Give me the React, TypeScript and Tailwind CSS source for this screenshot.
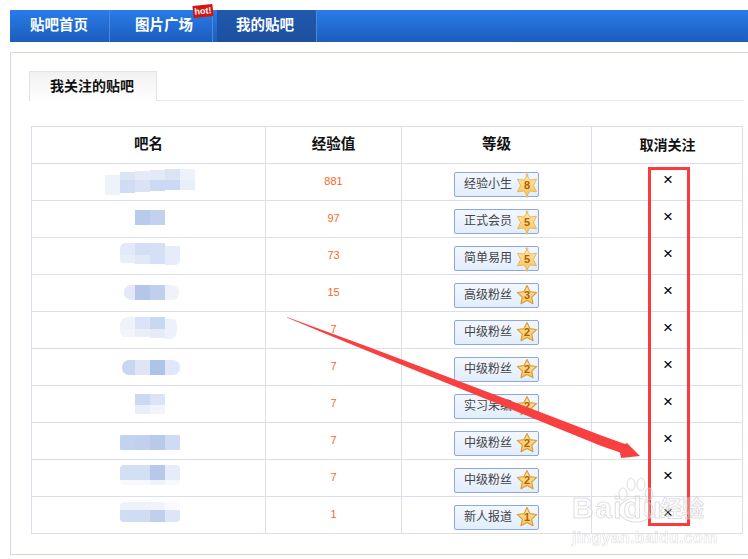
import React from "react";

type Block = [number, number, number, number, string];

type Row = {
  exp: number;
  rank: string;
  level: number;
  badge: "sheriff" | "star";
  clip: [number, number, number, number, number];
  blocks: Block[];
};

// mosaic coordinates are page pixels, the svg viewBox is shifted per row
const rows: Row[] = [
  {
    exp: 881, rank: "经验小生", level: 8, badge: "sheriff", clip: [105, 169, 90, 26, 2],
    blocks: [
      [105, 175, 15, 20, "#edf2fb"], [120, 172, 15, 8, "#dbe5f6"], [120, 180, 15, 13, "#cfdcf4"],
      [135, 171, 15, 9, "#e4ebf8"], [135, 180, 15, 12, "#dae3f5"], [150, 170, 15, 10, "#e2eaf8"],
      [150, 180, 15, 11, "#cbd9f2"], [165, 169, 15, 11, "#dbe4f5"], [165, 180, 15, 10, "#cbd9f2"],
      [180, 169, 15, 11, "#eef2fb"], [180, 180, 15, 10, "#e9effa"],
    ],
  },
  {
    exp: 97, rank: "正式会员", level: 5, badge: "sheriff", clip: [135, 210, 30, 15, 0],
    blocks: [[135, 210, 15, 15, "#b9cbea"], [150, 210, 15, 15, "#c1d1ee"]],
  },
  {
    exp: 73, rank: "简单易用", level: 5, badge: "sheriff", clip: [120, 243, 60, 22, 5],
    blocks: [
      [120, 243, 15, 12, "#e2e9f8"], [120, 255, 15, 8, "#e8eef9"], [135, 243, 15, 12, "#d5dff4"],
      [135, 255, 15, 9, "#e1e8f7"], [150, 243, 15, 21, "#d6e0f4"], [165, 246, 15, 19, "#e6ecf9"],
    ],
  },
  {
    exp: 15, rank: "高级粉丝", level: 3, badge: "star", clip: [124, 285, 55, 15, 7],
    blocks: [
      [124, 285, 11, 15, "#e3e9f8"], [135, 285, 15, 15, "#b4c7e9"],
      [150, 285, 15, 15, "#c0d0ec"], [165, 285, 14, 15, "#eef2fb"],
    ],
  },
  {
    exp: 7, rank: "中级粉丝", level: 2, badge: "star", clip: [120, 317, 57, 22, 8],
    blocks: [
      [120, 317, 15, 12, "#edf2fb"], [120, 329, 15, 8, "#f2f5fc"], [135, 317, 15, 12, "#dbe4f6"],
      [135, 329, 15, 8, "#e9eef9"], [150, 317, 15, 12, "#c9d8f1"], [150, 329, 15, 9, "#e5ebf8"],
      [165, 319, 12, 20, "#edf1fb"],
    ],
  },
  {
    exp: 7, rank: "中级粉丝", level: 2, badge: "star", clip: [122, 360, 58, 15, 7],
    blocks: [
      [122, 360, 13, 15, "#c8d6f2"], [135, 360, 15, 15, "#dde5f6"],
      [150, 360, 15, 15, "#aec3e9"], [165, 360, 15, 15, "#e0e7f7"],
    ],
  },
  {
    exp: 7, rank: "实习呆编", level: 2, badge: "star", clip: [135, 394, 30, 20, 0],
    blocks: [
      [135, 394, 15, 11, "#cbd9f2"], [135, 405, 15, 9, "#e9eef9"],
      [150, 394, 15, 11, "#dbe4f6"], [150, 405, 15, 9, "#f1f4fb"],
    ],
  },
  {
    exp: 7, rank: "中级粉丝", level: 2, badge: "star", clip: [120, 435, 60, 15, 1],
    blocks: [
      [120, 435, 15, 15, "#c2d3f0"], [135, 435, 15, 15, "#c1d0ee"],
      [150, 435, 15, 15, "#b7caea"], [165, 435, 15, 15, "#cfdbf3"],
    ],
  },
  {
    exp: 7, rank: "中级粉丝", level: 2, badge: "star", clip: [120, 465, 60, 20, 4],
    blocks: [
      [120, 465, 30, 15, "#d3e0f3"], [150, 465, 15, 15, "#b6c9ea"], [165, 465, 15, 15, "#e6ecf8"],
      [120, 480, 30, 5, "#f7f9fd"], [150, 480, 15, 5, "#eff3fb"], [165, 480, 15, 5, "#f7f9fd"],
    ],
  },
  {
    exp: 1, rank: "新人报道", level: 1, badge: "star", clip: [120, 502, 60, 20, 4],
    blocks: [
      [120, 502, 30, 8, "#eef2fa"], [150, 502, 15, 8, "#f1f4fb"], [165, 502, 15, 8, "#f9fafd"],
      [120, 510, 15, 12, "#d0dcf3"], [135, 510, 15, 12, "#d0dcf3"],
      [150, 510, 15, 12, "#c0d0ec"], [165, 510, 15, 12, "#dde5f6"],
    ],
  },
];

const Mosaic = ({ row, index }: { row: Row; index: number }) => {
  const top = 164 + index * 37;
  const [x, y, w, h, r] = row.clip;
  return (
    <svg width="233" height="36" viewBox={`32 ${top} 233 36`} className="block">
      <clipPath id={`mosaic-${index}`}>
        <rect x={x} y={y} width={w} height={h} rx={r} />
      </clipPath>
      <g clipPath={`url(#mosaic-${index})`}>
        {row.blocks.map((b, i) => (
          <rect key={i} x={b[0]} y={b[1]} width={b[2]} height={b[3]} fill={b[4]} />
        ))}
      </g>
    </svg>
  );
};

const LevelIcon = ({ kind, level, id }: { kind: Row["badge"]; level: number; id: number }) => (
  <svg
    width="22"
    height="25"
    viewBox="0 0 22 25"
    className={kind === "star" ? "absolute top-[-1px] left-[61px]" : "absolute top-0 left-[61px]"}
  >
    <defs>
      <linearGradient id={`lv-${id}`} x1="0" y1="0" x2="0" y2="1">
        <stop offset="0" stopColor="#ffe9a6" />
        <stop offset="1" stopColor="#f7c45a" />
      </linearGradient>
    </defs>
    {kind === "star" ? (
      <path
        d="M11 2.6l2.9 6 6.7.9-4.9 4.6 1.3 6.6-6-3.2-6 3.2 1.3-6.6L1.4 9.5l6.7-.9z"
        fill={`url(#lv-${id})`}
        stroke="#d8a03a"
        strokeWidth="1.2"
        strokeLinejoin="round"
      />
    ) : (
      <g stroke="#e2ad4e" strokeWidth="0.8" strokeLinejoin="round" fill={`url(#lv-${id})`}>
        <circle cx="11" cy="1.8" r="1" />
        <circle cx="11" cy="23.2" r="1" />
        <path d="M11 2.5l3 4.6 6.5-.9-3 6.3 3 6.3-6.5-.9-3 4.6-3-4.6-6.5.9 3-6.3-3-6.3 6.5.9z" />
      </g>
    )}
    <text
      x="11"
      y="16"
      textAnchor="middle"
      fontSize="11"
      fontWeight="700"
      fontFamily="Liberation Sans, sans-serif"
      fill="#b55c0c"
    >
      {level}
    </text>
  </svg>
);

const RankBadge = ({ row, id }: { row: Row; id: number }) => (
  <div className="relative mx-auto mt-[8px] h-[25px] w-[85px] rounded-[2px] border border-[#8ba7e8] bg-gradient-to-b from-[#f3f8ff] to-[#e2edfd] pl-[9px] text-left text-[12px] leading-[23px] text-[#444]">
    {row.rank}
    <LevelIcon kind={row.badge} level={row.level} id={id} />
  </div>
);

const Watermark = () => (
  <div className="pointer-events-none absolute top-[478px] left-[572px] h-[72px] w-[140px] opacity-65 blur-[0.4px]">
    <svg width="40" height="48" viewBox="0 0 40 48" className="absolute top-0 left-[45px]">
      <g fill="#ffffff" fillOpacity="0.4" stroke="#d4d4d4" strokeWidth="1.2">
        <ellipse cx="6" cy="16" rx="4" ry="6" />
        <ellipse cx="14" cy="6.5" rx="4" ry="6" />
        <ellipse cx="24" cy="6.5" rx="4" ry="6" />
        <ellipse cx="32" cy="16" rx="3.8" ry="6" />
        <ellipse cx="19" cy="32" rx="17" ry="12" fillOpacity="0.2" />
      </g>
    </svg>
    <div className="absolute top-[12px] left-0 text-[30px] leading-[36px] font-bold tracking-[1.5px] whitespace-nowrap text-white/40 [-webkit-text-stroke:1px_#cfcfcf]">
      Baidu
    </div>
    <div className="absolute top-[17px] left-[88px] text-[22px] leading-[28px] font-bold whitespace-nowrap text-white/40 [-webkit-text-stroke:1px_#cfcfcf]">
      经验
    </div>
    <div className="absolute top-[50px] left-0 text-[16px] leading-[20px] font-bold tracking-[0.3px] whitespace-nowrap text-white/40 [-webkit-text-stroke:0.7px_#d4d4d4]">
      jingyan.baidu.com
    </div>
  </div>
);

const App = () => {
  return (
    <div className="relative h-[559px] w-[748px] overflow-hidden bg-white pt-[10px] pl-[10px] font-['Liberation_Sans','Noto_Sans_CJK_SC',sans-serif]">
      <nav className="flex h-[32px] bg-gradient-to-b from-[#2a7ce8] to-[#1b5dbd] text-[14.5px] leading-[31px] font-bold text-white">
        <a className="w-[100px] border-r border-[#4a8be0] pl-[20px]">贴吧首页</a>
        <a className="relative w-[103px] border-r border-[#4a8be0] pl-[25px]">
          图片广场
          <span className="absolute top-[-5px] left-[83px] h-[12px] w-[20px] -rotate-6 bg-[#d4140e] text-center text-[9px] leading-[12px] font-bold text-white">
            hot!
          </span>
        </a>
        <a className="ml-[4px] w-[100px] border-r border-[#4a8be0] bg-gradient-to-b from-[#2159ae] to-[#1d4f9e] pl-[19px]">
          我的贴吧
        </a>
      </nav>

      <section className="mt-[10px] h-[503px] border-t border-b border-l border-[#d5dccb] pt-[18px] pl-[18px]">
        <div className="mr-[5px] h-[30px] border-b border-[#e6e8e6]">
          <div className="h-[30px] w-[128px] border-t border-r border-l border-[#e2e4e2] bg-gradient-to-b from-[#f1f1f1] to-white pl-[20px] text-[14px] leading-[28px] font-bold text-[#111]">
            我关注的贴吧
          </div>
        </div>

        <table className="mt-[25px] ml-[2px] w-[711px] table-fixed border-collapse text-center">
          <colgroup>
            <col className="w-[234px]" />
            <col className="w-[136px]" />
            <col className="w-[190px]" />
            <col className="w-[151px]" />
          </colgroup>
          <thead>
            <tr className="h-[37px] text-[14.5px] font-bold text-[#111]">
              <th className="border border-[#dcdfeb]">吧名</th>
              <th className="border border-[#dcdfeb]">经验值</th>
              <th className="border border-[#dcdfeb]">等级</th>
              <th className="border border-[#dcdfeb] pl-[1px] text-[14px]">取消关注</th>
            </tr>
          </thead>
          <tbody>
            {rows.map((row, i) => (
              <tr key={i} className="h-[37px]">
                <td className="border border-[#dcdfeb] p-0">
                  <Mosaic row={row} index={i} />
                </td>
                <td className="border border-[#dcdfeb] p-0 pb-[1px] text-[11px] text-[#f8681f]">{row.exp}</td>
                <td className="border border-[#dcdfeb] p-0 align-top">
                  <RankBadge row={row} id={i} />
                </td>
                <td className="border border-[#dcdfeb] p-0 pb-[5px] pl-[2px] text-[17px] leading-[20px] text-black">×</td>
              </tr>
            ))}
          </tbody>
        </table>
      </section>

      {/* annotations drawn over the screenshot */}
      <div className="pointer-events-none absolute top-[167px] left-[648px] h-[359px] w-[42px] border-[3.5px] border-[#fb3b3b]" />
      <svg width="748" height="559" className="pointer-events-none absolute top-0 left-0">
        <polygon
          points="287,317 325,331 370,347.5 460,381.5 600,435 625,444 627,443 640,456 621,458 620,452.5 600,445.5 460,388.5 370,352 325,333.5 287,317.6"
          fill="#f94040"
        />
      </svg>
      <Watermark />
    </div>
  );
};

export default App;
